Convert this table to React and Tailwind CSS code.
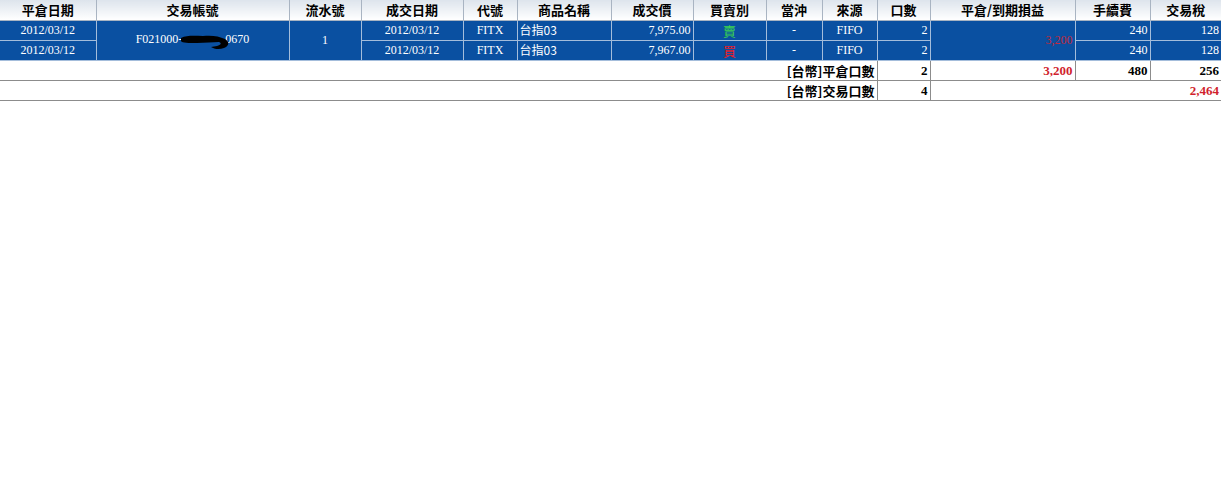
import React from "react";

const cols = [96, 193, 72, 102, 54, 94, 82, 73, 56, 55, 53, 145, 75, 71];
const heads = ["平倉日期", "交易帳號", "流水號", "成交日期", "代號", "商品名稱", "成交價", "買賣別", "當沖", "來源", "口數", "平倉/到期損益", "手續費", "交易稅"];

const rows = [
  { date: "2012/03/12", price: "7,975.00", side: "賣", sideCls: "text-[#3bd150]", fee: "240", tax: "128" },
  { date: "2012/03/12", price: "7,967.00", side: "買", sideCls: "text-[#e0202e]", fee: "240", tax: "128" },
];

const Blob = () => (
  <svg width="52" height="16" viewBox="0 0 52 16" className="inline-block align-middle -ml-[3px] -mr-[6px] relative top-[2px]">
    <path d="M2 4 C8 1 16 2 24 2 C32 1 40 2 46 5 C51 8 50 12 45 14 C40 16 35 15 32 13 L38 12 C42 11 43 9 40 8 C34 8 26 9 18 9 C10 9 3 9 2 7 Z" fill="#000" />
  </svg>
);

const cjk = { fontFamily: '"Noto Sans CJK TC", sans-serif' };

const App = () => {
  const th = "h-[20px] p-0 border border-[#a9b4c2] border-t-0 bg-gradient-to-b from-[#dde4ec] to-white font-bold text-[13px] text-black text-center";
  const td = "h-[20px] p-0 px-[2px] border border-[#a4bddb]";
  const tot = "h-[20px] p-0 px-[2px] border border-[#8c8c8c] font-bold text-[13px] text-right";

  return (
    <div className="w-[1221px] h-[480px] bg-white overflow-hidden" style={{ fontFamily: '"Liberation Serif", "Noto Sans CJK TC", serif' }}>
      <table className="table-fixed border-collapse w-[1221px] text-[12px] leading-none">
        <colgroup>
          {cols.map((w, i) => (
            <col key={i} style={{ width: w }} />
          ))}
        </colgroup>
        <thead>
          <tr>
            {heads.map((h, i) => (
              <th key={i} className={`${th} ${i === 0 ? "border-l-0" : ""} ${i === heads.length - 1 ? "border-r-0" : ""}`} style={cjk}>
                {h}
              </th>
            ))}
          </tr>
        </thead>
        <tbody>
          {rows.map((r, i) => (
            <tr key={i} className="bg-[#0a50a1] text-white">
              <td className={`${td} border-l-0 text-center`}>{r.date}</td>
              {i === 0 && (
                <td rowSpan={2} className={`${td} text-center`}>
                  <span>F021000-</span>
                  <Blob />
                  <span>0670</span>
                </td>
              )}
              {i === 0 && (
                <td rowSpan={2} className={`${td} text-center`}>1</td>
              )}
              <td className={`${td} text-center`}>{r.date}</td>
              <td className={`${td} text-center`}>FITX</td>
              <td className={`${td} text-left`} style={cjk}>台指03</td>
              <td className={`${td} text-right`}>{r.price}</td>
              <td className={`${td} text-center text-[13px] ${r.sideCls}`} style={cjk}>{r.side}</td>
              <td className={`${td} text-center`}>-</td>
              <td className={`${td} text-center`}>FIFO</td>
              <td className={`${td} text-right`}>2</td>
              {i === 0 && (
                <td rowSpan={2} className={`${td} text-right text-[#c02a40]`}>3,200</td>
              )}
              <td className={`${td} text-right`}>{r.fee}</td>
              <td className={`${td} border-r-0 text-right`}>{r.tax}</td>
            </tr>
          ))}
          <tr className="text-black">
            <td colSpan={10} className={`${tot} border-l-0 border-t-0`} style={cjk}>[台幣]平倉口數</td>
            <td className={`${tot} border-t-0`}>2</td>
            <td className={`${tot} border-t-0 text-[#d11f2e]`}>3,200</td>
            <td className={`${tot} border-t-0`}>480</td>
            <td className={`${tot} border-t-0 border-r-0`}>256</td>
          </tr>
          <tr className="text-black">
            <td colSpan={10} className={`${tot} border-l-0`} style={cjk}>[台幣]交易口數</td>
            <td className={tot}>4</td>
            <td colSpan={3} className={`${tot} border-r-0 text-[#d11f2e]`}>2,464</td>
          </tr>
        </tbody>
      </table>
    </div>
  );
};

export default App;
